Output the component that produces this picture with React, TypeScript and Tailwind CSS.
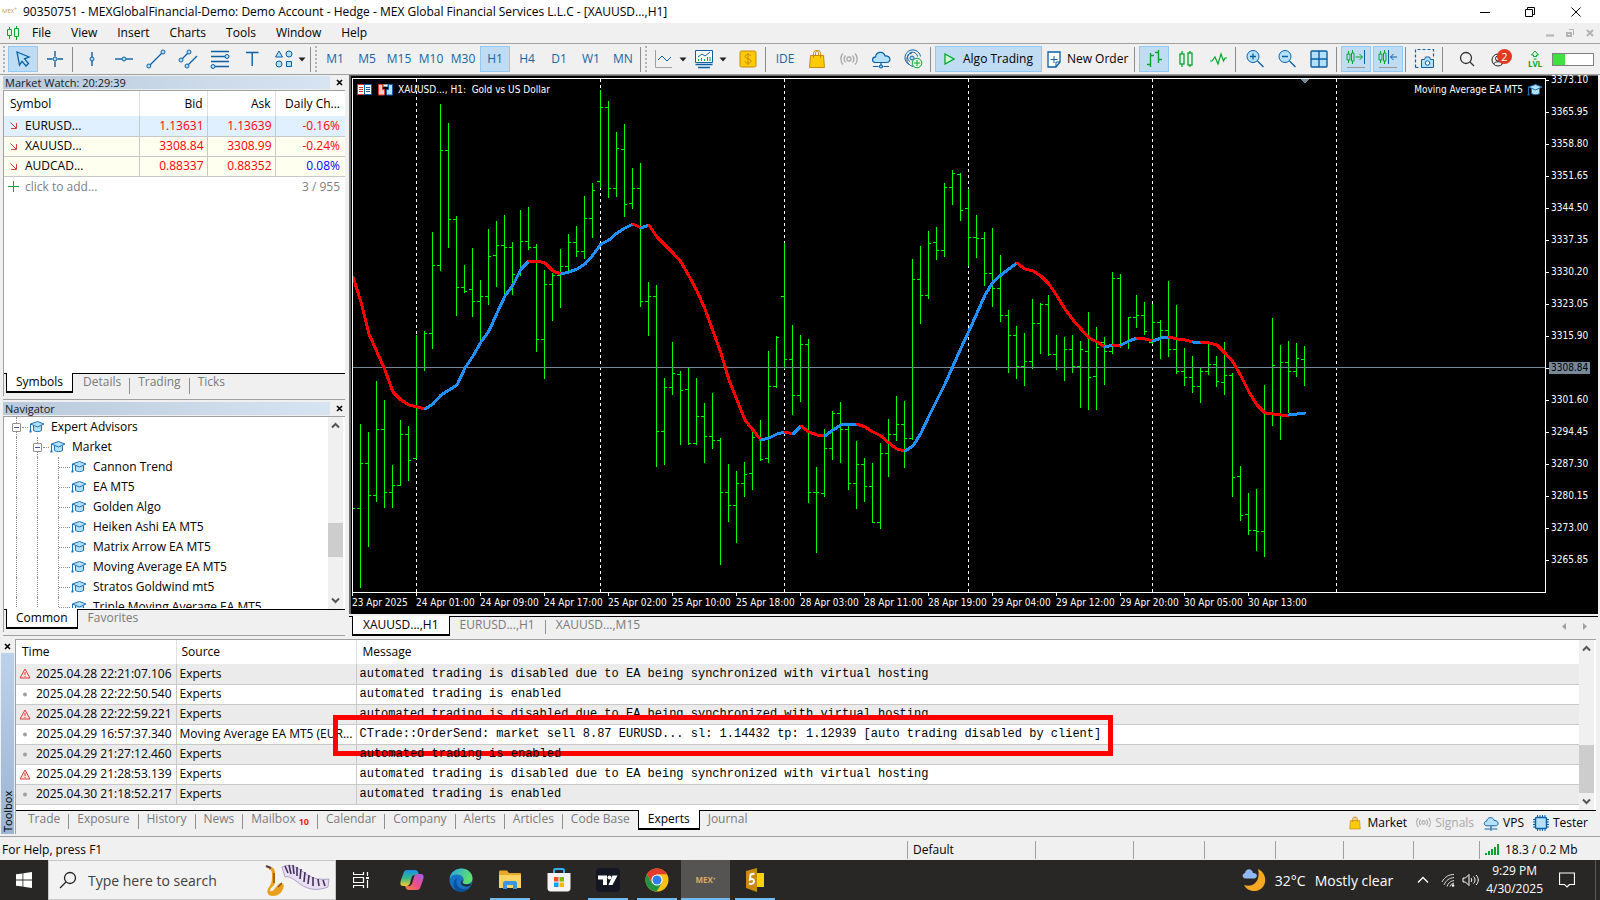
import React from 'react';
import clsx from 'clsx';

const BLUE = '#0a5fa5';
const LIGHT = '#b5e0fb';
const GREEN = '#05a62b';

// high, low, open, close in ticks below the top of the price scale
const bars: number[][] = [
  [1013, 1487, 1258, 1128], [1037, 1368, 1128, 1221], [889, 1237, 1221, 1029], [944, 1254, 1029, 1210],
  [1132, 1254, 1210, 1190], [1002, 1190, 1190, 1043], [1019, 1176, 1043, 1119], [756, 1113, 1113, 847],
  [743, 858, 847, 750], [456, 793, 750, 553], [84, 566, 553, 219], [139, 498, 219, 419],
  [409, 697, 419, 615], [552, 629, 615, 626], [502, 700, 622, 655], [595, 780, 655, 641],
  [447, 665, 643, 527], [424, 613, 524, 495], [407, 640, 495, 500], [485, 636, 500, 577],
  [392, 580, 577, 483], [383, 505, 483, 498], [491, 801, 498, 766], [566, 880, 766, 608],
  [575, 711, 608, 582], [505, 674, 580, 556], [462, 573, 556, 486], [438, 527, 486, 512],
  [351, 530, 512, 416], [314, 470, 416, 335], [44, 325, 309, 94], [75, 354, 94, 329],
  [166, 351, 329, 213], [142, 409, 216, 374], [270, 386, 371, 329], [256, 671, 329, 657],
  [601, 755, 657, 643], [610, 1135, 643, 1035], [880, 1130, 1035, 907], [775, 926, 907, 866],
  [859, 1071, 869, 916], [849, 1071, 913, 1068], [880, 1071, 1068, 991], [952, 1124, 991, 1049],
  [923, 1083, 1049, 1061], [1054, 1420, 1061, 1210], [1130, 1295, 1212, 1250], [1150, 1356, 1250, 1186],
  [1124, 1222, 1186, 1158], [1037, 1202, 1155, 1052], [1002, 1118, 1052, 1116], [801, 1124, 1113, 904],
  [759, 905, 904, 760], [487, 850, 643, 826], [726, 984, 826, 930], [755, 947, 930, 782],
  [767, 1240, 782, 1212], [1138, 1385, 1212, 1212], [1028, 1222, 1215, 1084], [976, 1115, 1084, 980],
  [950, 1124, 980, 1029], [1020, 1202, 1029, 1184], [1063, 1257, 1184, 1129], [1112, 1237, 1129, 1192],
  [1127, 1298, 1192, 1297], [1069, 1315, 1297, 1099], [999, 1164, 1099, 1041], [932, 1060, 1041, 1014],
  [947, 1138, 1014, 1055], [534, 1057, 1055, 593], [497, 720, 593, 640], [453, 648, 640, 489],
  [441, 534, 486, 507], [314, 525, 507, 326], [276, 375, 326, 286], [285, 421, 288, 393],
  [331, 552, 387, 471], [407, 528, 471, 474], [456, 610, 474, 576], [444, 671, 576, 619],
  [523, 714, 619, 698], [682, 862, 698, 756], [729, 880, 756, 844], [749, 900, 844, 831],
  [650, 850, 831, 721], [662, 807, 721, 666], [639, 813, 666, 811], [755, 854, 811, 847],
  [761, 886, 847, 797], [755, 862, 797, 844], [772, 964, 844, 797], [688, 970, 800, 878],
  [732, 970, 875, 790], [761, 897, 776, 802], [572, 807, 802, 590], [578, 790, 590, 783],
  [703, 793, 775, 704], [639, 732, 704, 698], [659, 752, 698, 744], [665, 778, 775, 718],
  [711, 822, 718, 741], [598, 816, 741, 795], [668, 865, 795, 860], [793, 900, 860, 878],
  [816, 920, 878, 904], [849, 950, 904, 860], [772, 868, 860, 840], [816, 903, 840, 888],
  [775, 926, 890, 872], [865, 1222, 872, 1168], [1135, 1292, 1165, 1279], [1214, 1333, 1276, 1322],
  [1202, 1379, 1322, 1325], [900, 1397, 1325, 980], [706, 1016, 980, 843], [784, 1057, 849, 834],
  [772, 978, 834, 860], [778, 874, 860, 823], [787, 900, 826, 849],
];

// moving average: one value per bar, starting one bar before the first
const average = [
  587, 660, 752, 805, 858, 921, 945, 957, 965, 971, 954, 930, 915, 901, 850, 817, 775, 742, 692, 643,
  610, 562, 539, 541, 545, 570, 579, 571, 562, 549, 523, 492, 480, 460, 445, 434, 445, 437, 470, 493,
  516, 543, 585, 628, 680, 742, 806, 885, 943, 1001, 1030, 1060, 1053, 1042, 1037, 1042, 1020, 1036,
  1046, 1049, 1030, 1017, 1014, 1014, 1022, 1038, 1049, 1070, 1085, 1093, 1077, 1040, 990, 945, 898,
  845, 793, 742, 690, 640, 602, 582, 564, 547, 564, 570, 584, 606, 643, 679, 711, 737, 763, 776, 790,
  783, 785, 773, 765, 768, 771, 765, 762, 768, 769, 776, 776, 779, 785, 806, 834, 875, 920, 957, 980,
  985, 988, 988, 985, 982,
];
// flat steps that count as rising
const risingFlats = [63, 106];

const barX = (i: number) => 7 + i * 8;
const toY = (v: number) => Math.round(v / 2.9037) - 4;

const timeLabels = [
  '23 Apr 2025', '24 Apr 01:00', '24 Apr 09:00', '24 Apr 17:00', '25 Apr 02:00', '25 Apr 10:00',
  '25 Apr 18:00', '28 Apr 03:00', '28 Apr 11:00', '28 Apr 19:00', '29 Apr 04:00', '29 Apr 12:00',
  '29 Apr 20:00', '30 Apr 05:00', '30 Apr 13:00',
];

const priceLabels = [
  '3373.10', '3365.95', '3358.80', '3351.65', '3344.50', '3337.35', '3330.20', '3323.05', '3315.90',
  '3308.84', '3301.60', '3294.45', '3287.30', '3280.15', '3273.00', '3265.85',
];

const symbols = [
  { name: 'EURUSD...', bid: '1.13631', ask: '1.13639', change: '-0.16%' },
  { name: 'XAUUSD...', bid: '3308.84', ask: '3308.99', change: '-0.24%' },
  { name: 'AUDCAD...', bid: '0.88337', ask: '0.88352', change: '0.08%' },
];

const advisors = [
  'Cannon Trend', 'EA MT5', 'Golden Algo', 'Heiken Ashi EA MT5', 'Matrix Arrow EA MT5',
  'Moving Average EA MT5', 'Stratos Goldwind mt5', 'Triple Moving Average EA MT5',
];

const DISABLED = 'automated trading is disabled due to EA being synchronized with virtual hosting';
const ENABLED = 'automated trading is enabled';

const logs = [
  { time: '2025.04.28 22:21:07.106', source: 'Experts', message: DISABLED, warn: true },
  { time: '2025.04.28 22:22:50.540', source: 'Experts', message: ENABLED },
  { time: '2025.04.28 22:22:59.221', source: 'Experts', message: DISABLED, warn: true },
  {
    time: '2025.04.29 16:57:37.340',
    source: 'Moving Average EA MT5 (EUR...',
    message: 'CTrade::OrderSend: market sell 8.87 EURUSD... sl: 1.14432 tp: 1.12939 [auto trading disabled by client]',
    marked: true,
  },
  { time: '2025.04.29 21:27:12.460', source: 'Experts', message: ENABLED },
  { time: '2025.04.29 21:28:53.139', source: 'Experts', message: DISABLED, warn: true },
  { time: '2025.04.30 21:18:52.217', source: 'Experts', message: ENABLED },
];

const Icon: React.FC<{ w?: number; h?: number; stroke?: string; children: React.ReactNode }> = ({
  w = 20,
  h = 20,
  stroke = BLUE,
  children,
}) => (
  <svg width={w} height={h} viewBox={`0 0 ${w} ${h}`} fill="none" stroke={stroke} className="shrink-0" aria-hidden="true">
    {children}
  </svg>
);

const HatIcon = () => (
  <Icon w={16} h={14} stroke="#1a70b4">
    <path d="M4.500 5.500v5c2 1.500 6 1.500 8 0v-5" fill={LIGHT} />
    <path d="M1.500 4 8.500 1.500l6.500 2.500-6.500 3z" fill={LIGHT} strokeLinejoin="round" />
    <path d="M1.500 4v7" />
    <rect x="0.500" y="10.500" width="2" height="2" fill="#1a70b4" stroke="none" />
  </Icon>
);

const BagIcon = ({ size = 20 }: { size?: number }) => (
  <svg width={size} height={size} viewBox="0 0 20 20" fill="none" stroke="#c98a0a" className="shrink-0" aria-hidden="true">
    <path d="M3.500 6.500h13l1 12h-15z" fill="#fccb05" />
    <path d="M6.500 9V4.500c0-4 5-4 5 0V7M8.500 7V4.500c0-4 5-4 5 0V9" />
  </svg>
);

const SignalIcon = ({ size = 18 }: { size?: number }) => (
  <svg width={size} height={size} viewBox="0 0 18 18" fill="none" stroke="#a8a8a8" strokeWidth="1.300" className="shrink-0" aria-hidden="true">
    <circle cx="9" cy="9" r="2" />
    <path d="M5.500 5.500c-1.600 2-1.600 5 0 7M12.500 5.500c1.600 2 1.600 5 0 7M2.800 3.500c-2.600 3.200-2.600 7.800 0 11M15.200 3.500c2.600 3.200 2.600 7.800 0 11" />
  </svg>
);

const CloudIcon = ({ size = 20 }: { size?: number }) => (
  <svg width={size} height={size} viewBox="0 0 20 20" fill="none" stroke={BLUE} strokeWidth="1.200" className="shrink-0" aria-hidden="true">
    <path d="M5 13.500C.5 13.500.5 8 4.600 7.800 5 2.500 12.500 1.500 14 6.800c6-.3 6.500 6.700 1.500 6.700z" fill={LIGHT} />
    <path d="M10 13.500V16M2 17.500h5.500M12.500 17.500H18" />
    <circle cx="10" cy="17.500" r="1.500" fill={LIGHT} />
  </svg>
);

const Tool: React.FC<{ label: string; active?: boolean; wide?: string; children: React.ReactNode }> = ({
  label,
  active,
  wide = 'w-[30px] justify-center',
  children,
}) => (
  <button
    type="button"
    aria-label={label}
    className={clsx(
      'flex h-[26px] shrink-0 items-center border',
      wide,
      active ? 'border-[#90c8f6] bg-[#c0dcf3]' : 'border-transparent'
    )}
  >
    {children}
  </button>
);

const Caret = () => (
  <svg width="8" height="5" viewBox="0 0 8 5" className="shrink-0" aria-hidden="true">
    <path d="M0.500 0.500h7L4 4.500z" fill="#222" />
  </svg>
);

const Sep = () => <span className="mr-[2px] h-[25px] w-px shrink-0 bg-[#8c8c8c]" />;
const Grip = () => <span className="mr-px h-[26px] shrink-0 border-l-2 border-dotted border-[#b4b4b4]" />;

const Candles = ({ w = 16, h = 18 }: { w?: number; h?: number }) => (
  <svg width={w} height={h} viewBox="0 0 16 18" fill="none" stroke={GREEN} strokeWidth="1.300" aria-hidden="true">
    <path d="M4 1v3M4 14v3M12 1v2M12 15v2" />
    <rect x="2" y="4" width="4" height="10" />
    <rect x="10" y="3" width="4" height="12" />
  </svg>
);

const TitleBar = () => (
  <header className="flex h-[23px] items-center bg-white">
    <span className="ml-[2px] w-[21px] text-[6px] text-[#c89a4e]">MEX<sup>+</sup></span>
    <h1 className="flex-1 truncate text-[12px]">
      90350751 - MEXGlobalFinancial-Demo: Demo Account - Hedge - MEX Global Financial Services L.L.C - [XAUUSD...,H1]
    </h1>
    <div className="flex items-center">
      <button type="button" aria-label="Minimize" className="flex w-[45px] justify-center">
        <Icon w={10} h={10} stroke="#000"><path d="M0 5.500h10" /></Icon>
      </button>
      <button type="button" aria-label="Restore" className="flex w-[45px] justify-center">
        <Icon w={10} h={10} stroke="#000"><path d="M.5 2.500h7v7h-7zM2.500 2.500v-2h7v7h-2" /></Icon>
      </button>
      <button type="button" aria-label="Close" className="flex w-[48px] justify-center">
        <Icon w={10} h={10} stroke="#000"><path d="M.5.5l9 9M9.500.5l-9 9" /></Icon>
      </button>
    </div>
  </header>
);

const MenuBar = () => (
  <nav className="flex h-5 items-center pl-[6px] text-[12px]">
    <Icon w={14} h={14} stroke={GREEN}>
      <path d="M3.500 1v2M3.500 10v3M10.500 0v2M10.500 11v3" />
      <path d="M1.500 3.500h4v6h-4zM8.500 2.500h4v8h-4z" />
    </Icon>
    <div className="ml-3 flex gap-5">
      {['File', 'View', 'Insert', 'Charts', 'Tools', 'Window', 'Help'].map((item) => (
        <button type="button" key={item}>{item}</button>
      ))}
    </div>
    <div className="mr-[6px] ml-auto flex items-center gap-3">
      <Icon w={8} h={8} stroke="#b4b4b4"><path d="M0 6.500h8" strokeWidth="2" /></Icon>
      <Icon w={8} h={8} stroke="#b4b4b4"><path d="M1 4h4v3H1z" strokeWidth="2" /><path d="M3 .5h4.500V6" /></Icon>
      <Icon w={8} h={8} stroke="#b4b4b4"><path d="M1 1l6 6M7 1L1 7" strokeWidth="2" /></Icon>
    </div>
  </nav>
);

const Toolbar = () => (
  <div className="flex h-8 items-center gap-[2px] border-y border-[#a0a0a0] pl-[3px] text-[12px]">
    <Grip />
    <Tool label="Cursor" active>
      <Icon><path d="M4 3l12 5-4.500 1.800 4 4.700-2.500 2.500-4-4.700L6.500 16z" fill={LIGHT} strokeWidth="1.300" /></Icon>
    </Tool>
    <Tool label="Crosshair">
      <Icon><path d="M10 2v5.500M10 12.500V18M2 10h5.500M12.500 10H18" strokeWidth="1.400" /><circle cx="10" cy="10" r="2" fill={LIGHT} /></Icon>
    </Tool>
    <Sep />
    <Tool label="Vertical line">
      <Icon><path d="M10 3v14" strokeWidth="1.400" /><circle cx="10" cy="10" r="2" fill={LIGHT} /></Icon>
    </Tool>
    <Tool label="Horizontal line">
      <Icon><path d="M1 10h18" strokeWidth="1.400" /><circle cx="10" cy="10" r="2" fill={LIGHT} /></Icon>
    </Tool>
    <Tool label="Trend line">
      <Icon><path d="M3 17L17 3" strokeWidth="1.300" /><circle cx="2.800" cy="17" r="2" fill={LIGHT} /><circle cx="17" cy="3" r="2" fill={LIGHT} /></Icon>
    </Tool>
    <Tool label="Channel">
      <Icon>
        <path d="M3 11l8-8M9 17l10-10" strokeWidth="1.300" />
        <circle cx="3" cy="11" r="2" fill={LIGHT} /><circle cx="11" cy="3" r="2" fill={LIGHT} /><circle cx="9" cy="17" r="2" fill={LIGHT} />
      </Icon>
    </Tool>
    <Tool label="Fibonacci">
      <Icon>
        <path d="M1 2.500h18M1 7.500h18M1 12.500h18M1 17.500h18" strokeWidth="1.300" />
        <circle cx="17" cy="7.500" r="2" fill={LIGHT} /><circle cx="3" cy="17.500" r="2" fill={LIGHT} />
      </Icon>
    </Tool>
    <Tool label="Text"><Icon><path d="M4 3.500h12.500M10.200 3.500V17" strokeWidth="1.400" /></Icon></Tool>
    <Tool label="Shapes" wide="mr-px w-[38px] justify-between pl-[4px]">
      <Icon>
        <path d="M5 2l3.500 6h-7z" fill={LIGHT} /><circle cx="15" cy="5" r="3" fill={LIGHT} />
        <circle cx="5" cy="15" r="3" fill={LIGHT} /><path d="M12.500 12.500h5v5h-5z" fill={LIGHT} />
      </Icon>
      <Caret />
    </Tool>
    <Sep />
    <Grip />
    {['M1', 'M5', 'M15', 'M10', 'M30', 'H1', 'H4', 'D1', 'W1', 'MN'].map((tf) => (
      <Tool key={tf} label={tf} active={tf === 'H1'}>
        <span className="text-[#1a64a0]">{tf}</span>
      </Tool>
    ))}
    <Sep />
    <Grip />
    <Tool label="Line studies" wide="w-[38px] justify-between pl-[3px]">
      <Icon><path d="M1.500 1v17.500H18" stroke="#a0a0a0" /><path d="M4 11l4-4 5 5 4-4" /></Icon>
      <Caret />
    </Tool>
    <Tool label="Indicators" wide="w-[38px] justify-between pl-[3px]">
      <Icon>
        <path d="M1.500 1.500h17v12h-17z" fill="#fff" /><path d="M4 8l4-3 3 2 5-4" />
        <path d="M4.500 12v-2M7.500 12V9M10.500 12v-2M13.500 12V8M16 12V8" stroke={GREEN} />
        <path d="M1.500 15.500h17M4 18.500h12" strokeWidth="1.600" />
      </Icon>
      <Caret />
    </Tool>
    <span className="w-px" />
    <Tool label="Depth of market">
      <Icon w={18} h={18} stroke="#c98a0a">
        <rect x="1" y="1" width="16" height="16" rx="1.500" fill="#fccb05" />
        <path d="M12 6c-1-2-6-2-6 .5s6 2 6 4.500-5 3-6 .5M9 3v12" />
      </Icon>
    </Tool>
    <Sep />
    <Tool label="MetaEditor"><span className="text-[#1a64a0]">IDE</span></Tool>
    <Tool label="Market"><BagIcon /></Tool>
    <Tool label="Signals"><SignalIcon /></Tool>
    <Tool label="VPS"><CloudIcon /></Tool>
    <Tool label="Copy trading">
      <Icon>
        <path d="M6 15.500a7.800 7.800 0 1 1 11.500-8M7 12.500a5 5 0 1 1 7.500-5M10 17.500C2 15.500 2 5.500 9 4" />
        <circle cx="9" cy="9" r="2" fill={LIGHT} />
        <circle cx="14" cy="14" r="4.800" fill="#e6fbe9" stroke={GREEN} /><path d="M14 11v6M11 14h6" stroke={GREEN} />
      </Icon>
    </Tool>
    <Sep />
    <Tool label="Algo Trading" active wide="px-2 gap-2">
      <Icon w={11} h={12} stroke={GREEN}><path d="M1 1l9 5-9 5z" fill="#d7f7dd" strokeWidth="1.300" /></Icon>
      <span className="whitespace-nowrap">Algo Trading</span>
    </Tool>
    <Tool label="New Order" wide="pl-[2px] pr-[3px] gap-[6px]">
      <Icon w={14} h={17}>
        <path d="M1 1h12v10l-4 5H1z" fill="#fff" strokeWidth="1.300" /><path d="M13 11H9v5M7 5v7M3.500 8.500h7" />
      </Icon>
      <span className="whitespace-nowrap">New Order</span>
    </Tool>
    <Sep />
    <Tool label="Bar chart" active>
      <Icon stroke={GREEN}><path d="M6.500 4v14M3 15.500h3.500M6.500 6.500H10M14.500 1v13M11 3.500h3.500M14.500 10.500H18" strokeWidth="1.400" /></Icon>
    </Tool>
    <Tool label="Candlesticks"><Candles /></Tool>
    <Tool label="Line chart">
      <Icon stroke={GREEN}><path d="M2 12h2l3-4 3 7 3-10 2.500 7L17 9h2" strokeWidth="1.200" /></Icon>
    </Tool>
    <Sep />
    <Tool label="Zoom in">
      <Icon><circle cx="8" cy="7.500" r="6" fill={LIGHT} /><path d="M8 4.500v6M5 7.500h6M12.500 12l6 6" strokeWidth="1.300" /></Icon>
    </Tool>
    <Tool label="Zoom out">
      <Icon><circle cx="8" cy="7.500" r="6" fill={LIGHT} /><path d="M5 7.500h6M12.500 12l6 6" strokeWidth="1.300" /></Icon>
    </Tool>
    <Tool label="Tile windows">
      <Icon w={18} h={18}><rect x="1" y="1" width="16" height="16" rx="1" fill={LIGHT} strokeWidth="1.400" /><path d="M9 1v16M1 9h16" strokeWidth="1.400" /></Icon>
    </Tool>
    <Sep />
    {['Auto scroll', 'Chart shift'].map((label, i) => (
      <Tool key={label} label={label} active>
        <Icon>
          <path d="M2.500 2v3M2.500 11v3M6.500 1v3M6.500 12v3M1 5h3v6H1zM5.500 4h2.500v8H5.500z" stroke={GREEN} />
          {i === 0
            ? <><path d="M9.500 8h7M13.500 5l3 3-3 3" stroke={GREEN} /><path d="M18.500 1v14" /></>
            : <path d="M10.500 1v14M12.500 8H19M15.500 5l-3 3 3 3" />}
          <path d="M1 18.500h18" stroke="#999" />
        </Icon>
      </Tool>
    ))}
    <Sep />
    <Tool label="Screenshot">
      <Icon w={22} h={22}>
        <path d="M1.500 19.500v-18h18v8M1.500 19.500h4" strokeDasharray="3 2" strokeWidth="1.200" />
        <path d="M7.500 11.500h3l1-2.500h4l1 2.500h3v8h-12z" fill={LIGHT} /><circle cx="13.500" cy="15" r="2.200" fill="#fff" />
      </Icon>
    </Tool>
    <Sep />
    <div className="mr-[6px] ml-auto flex items-center">
      <Tool label="Search">
        <Icon w={16} h={16} stroke="#333"><circle cx="7" cy="7" r="5.500" strokeWidth="1.300" /><path d="M11 11l4 4" strokeWidth="1.300" /></Icon>
      </Tool>
      <Tool label="Notifications" wide="ml-2 w-[30px] relative">
        <Icon w={15} h={15} stroke="#222"><circle cx="7" cy="8" r="6" /><circle cx="7" cy="6.500" r="2.500" /><path d="M2.500 12c1.500-3 7.500-3 9 0" /></Icon>
        <span className="absolute top-[2px] left-[6px] h-[15px] w-[15px] rounded-full bg-[#e23a20] text-[11px] leading-[15px] text-white">2</span>
      </Tool>
      <Tool label="Level" wide="w-[30px] flex-col justify-center">
        <Icon w={12} h={10} stroke={GREEN}><path d="M6 1l3.500 4H7.500v1.500h-3V5h-2zM4.500 9h3" /></Icon>
        <span className="text-[8px] leading-[8px] font-bold text-[#05a62b]">LVL</span>
      </Tool>
      <span className="ml-[2px] flex h-[13px] w-[42px] border border-[#808080] bg-white"><i className="w-[12px] bg-[#3fe03f]" /></span>
    </div>
  </div>
);

const PanelTitle = ({ children }: { children: React.ReactNode }) => (
  <div className="mb-px flex h-[13px] items-center justify-between text-[11px] leading-[13px]">
    <h2 className="flex-1 bg-linear-to-r from-[#b9c9db] to-[#d7e4f2] pl-[2px] text-[#101820]">{children}</h2>
    <button type="button" aria-label="Close panel" className="flex w-[15px] justify-end pr-[2px]">
      <Icon w={7} h={7} stroke="#000"><path d="M1 1l5 5M6 1L1 6" strokeWidth="1.600" /></Icon>
    </button>
  </div>
);

const tabBase = '-mt-px h-5 border-x border-b-2 border-transparent px-[7px] leading-[18px]';
const tabOn = '-mt-px h-5 border-x border-b-2 border-black bg-white px-[9px] leading-[18px] text-black';

const MarketWatch = () => (
  <section className="flex h-[325px] flex-col border-b border-[#a0a0a0] pt-px pb-[3px]">
    <PanelTitle>Market Watch: 20:29:39</PanelTitle>
    <div className="flex flex-1 flex-col border-t border-l border-[#a0a0a0] bg-white text-[12px]">
      <table className="w-full table-fixed border-collapse">
        <thead>
          <tr className="h-[25px]">
            <th className="w-[135px] border-r border-[#e0e0e0] pl-[6px] text-left font-normal">Symbol</th>
            <th className="w-[68px] border-r border-[#e0e0e0] pr-[4px] text-right font-normal">Bid</th>
            <th className="w-[68px] border-r border-[#e0e0e0] pr-[4px] text-right font-normal">Ask</th>
            <th className="pr-[5px] text-right font-normal whitespace-nowrap">Daily Ch...</th>
          </tr>
        </thead>
        <tbody>
          {symbols.map((s, i) => (
            <tr key={s.name} className={clsx('h-5 border-b border-[#c8c8c8] text-[#ff0000]', i === 0 ? 'bg-[#e0f0ff]' : 'bg-[#fffff0]')}>
              <td className="border-r border-[#c8c8c8] p-0 text-black">
                <span className="flex items-center gap-2 pl-[6px]">
                  <Icon w={7} h={7} stroke="#d83c3c"><path d="M.5.5l5.500 5.500M6.500 1v5.500H1" /></Icon>
                  {s.name}
                </span>
              </td>
              <td className="border-r border-[#c8c8c8] p-0 pr-[3px] text-right">{s.bid}</td>
              <td className="border-r border-[#c8c8c8] p-0 pr-[3px] text-right">{s.ask}</td>
              <td className={clsx('p-0 pr-[5px] text-right', !s.change.startsWith('-') && 'text-[#0000ff]')}>{s.change}</td>
            </tr>
          ))}
        </tbody>
      </table>
      <div className="flex h-5 items-center pr-[5px] pl-[4px] text-[#808080]">
        <Icon w={11} h={11} stroke={GREEN}><path d="M5.500 0v11M0 5.500h11" /></Icon>
        <button type="button" className="ml-[6px]">click to add...</button>
        <span className="ml-auto">3 / 955</span>
      </div>
      <div className="mt-auto flex h-[23px] border-t border-black bg-[#f0f0f0] pl-[2px] text-[#7a7a7a]">
        <button type="button" className={tabOn}>Symbols</button>
        <button type="button" className={clsx(tabBase, 'ml-[2px]')}>Details</button>
        <i className="mt-1 h-4 w-px bg-[#909090]" />
        <button type="button" className={tabBase}>Trading</button>
        <i className="mt-1 h-4 w-px bg-[#909090]" />
        <button type="button" className={tabBase}>Ticks</button>
      </div>
    </div>
  </section>
);

const Guide = ({ box, end }: { box?: boolean; end?: boolean }) => (
  <span className={clsx('relative flex h-5 shrink-0 items-center border-l border-dotted border-[#909090]', end ? 'w-[13px]' : 'w-[21px]')}>
    {end && <i className={clsx('h-px border-t border-dotted border-[#909090]', box ? 'ml-[5px] w-[6px]' : 'w-[11px]')} />}
    {box && (
      <button type="button" aria-label="Collapse" className="absolute top-[6px] -left-[5px] flex h-[9px] w-[9px] items-center justify-center rounded-[1px] border border-[#909090] bg-white">
        <i className="h-px w-[5px] bg-[#3858a8]" />
      </button>
    )}
  </span>
);

const ScrollArrow = ({ up, label }: { up?: boolean; label: string }) => (
  <button type="button" aria-label={label} className="flex h-[17px] items-center justify-center">
    <Icon w={9} h={7} stroke="#555"><path d={up ? 'M1 5.500l3.500-3.500L8 5.500' : 'M1 1.500L4.500 5 8 1.500'} strokeWidth="2" /></Icon>
  </button>
);

const Navigator = () => (
  <section className="flex flex-1 flex-col border-b border-[#a0a0a0] pt-[2px] pb-[3px]">
    <PanelTitle>Navigator</PanelTitle>
    <div className="flex flex-1 flex-col border-t border-l border-[#a0a0a0] bg-white text-[12px]">
      <div className="flex h-[191px] grow">
        <ul className="h-[191px] flex-1 overflow-hidden pl-[12px]">
          <li className="flex h-5 items-center">
            <Guide box end /><HatIcon /><span className="ml-[6px]">Expert Advisors</span>
          </li>
          <li className="flex h-5 items-center">
            <Guide /><Guide box end /><HatIcon /><span className="ml-[6px]">Market</span>
          </li>
          {advisors.map((name) => (
            <li key={name} className="flex h-5 items-center">
              <Guide /><Guide /><Guide end /><HatIcon /><span className="ml-[6px] whitespace-nowrap">{name}</span>
            </li>
          ))}
        </ul>
        <div className="mr-[2px] flex w-[15px] flex-col bg-[#f0f0f0]">
          <ScrollArrow up label="Scroll up" />
          <span className="mt-[89px] h-[34px] bg-[#cdcdcd]" />
          <span className="mt-auto" />
          <ScrollArrow label="Scroll down" />
        </div>
      </div>
      <div className="flex h-[23px] border-t border-black bg-[#f0f0f0] pl-[2px] text-[#7a7a7a]">
        <button type="button" className={tabOn}>Common</button>
        <button type="button" className={clsx(tabBase, 'ml-[2px]')}>Favorites</button>
      </div>
    </div>
  </section>
);

const averageColor = (i: number) =>
  average[i + 1] < average[i] || risingFlats.includes(i + 1) ? '#1e90ff' : '#ff0000';

const Plot = () => (
  <svg width="100%" height="513" className="block" shapeRendering="crispEdges" role="img" aria-label="XAUUSD hourly bars">
    {[0, 1, 2, 3, 4, 5].map((d) => (
      <path key={d} d={`M${63.5 + d * 184} 0V513`} stroke="#fff" strokeDasharray="3 3" />
    ))}
    <path
      fill="none"
      stroke="#00ff00"
      d={bars
        .map(([high, low, open, close], i) => {
          const x = barX(i);
          return `M${x + 0.5} ${toY(high)}V${toY(low) + 1}M${x - 3} ${toY(open) + 0.5}H${x}M${x + 1} ${toY(close) + 0.5}h2`;
        })
        .join('') + `M0 ${toY(1258) + 0.5}h2`}
    />
    <line x1="0" x2="100%" y1="288.5" y2="288.5" stroke="#778899" />
    {average.slice(0, -1).map((v, i) => (
      <line
        key={i}
        x1={barX(i - 1) + 1}
        y1={toY(v)}
        x2={barX(i) + 1}
        y2={toY(average[i + 1])}
        stroke={averageColor(i)}
        strokeWidth="3"
        strokeLinecap="round"
      />
    ))}
    <path d="M947 0h9l-4.500 4.500z" fill="#778899" />
  </svg>
);

const Chart = () => (
  <div className="flex flex-1 flex-col border-t border-l-2 border-[#696969] bg-black font-['DejaVu_Sans_Condensed','DejaVu_Sans',sans-serif] text-[10px] text-white">
    <div className="flex">
      <div className="relative mt-[2px] ml-px min-w-0 flex-1 border border-white">
        <Plot />
        <div className="absolute top-[3px] left-[4px] flex items-center">
          <Icon w={15} h={12}>
            <path d="M.5.5h7v10h-7z" fill="#fff" stroke="#d8362f" /><path d="M2 3.500h4M2 5.500h4M2 7.500h4" stroke="#d8362f" />
            <path d="M7.500.5h7v10h-7z" fill="#fff" /><path d="M9 3.500h4M9 5.500h4M9 7.500h4" />
          </Icon>
          <span className="w-[6px]" />
          <Icon w={15} h={12}>
            <path d="M.5.5h4v5h2v5.500h-6z" fill="#fbc9c4" stroke="#d8362f" /><path d="M10.500.5h4v10.500h-6V5.500h2z" fill={LIGHT} />
            <path d="M5.500.5h4v2h-4z" fill="#fff" stroke="#999" />
          </Icon>
          <span className="ml-[5px] whitespace-pre">XAUUSD..., H1:  Gold vs US Dollar</span>
        </div>
        <div className="absolute top-[3px] right-[2px] flex items-center gap-1">
          Moving Average EA MT5 <HatIcon />
        </div>
      </div>
      <div className="w-[52px] shrink-0">
        {priceLabels.map((price) => (
          <div key={price} className="flex h-8 items-start leading-[8px]">
            <div className="flex h-2 items-center">
              <i className="h-px w-[3px] bg-white" />
              {price === '3308.84'
                ? <span className="bg-[#778899] px-[2px] leading-[12px] text-black">{price}</span>
                : <span className="pl-[2px]">{price}</span>}
            </div>
          </div>
        ))}
      </div>
    </div>
    <div className="flex h-[20px] pl-px">
      {timeLabels.map((label) => (
        <div key={label} className="w-16 shrink-0 whitespace-nowrap">
          <i className="block h-[3px] w-px bg-white" />
          <span className="block leading-[13px]">{label}</span>
        </div>
      ))}
    </div>
  </div>
);

const ChartTabs = () => (
  <div className="mt-[2px] flex h-[20px] border-t border-black pl-[3px] text-[12px] text-[#7a7a7a]">
    <button type="button" className="-mt-px h-5 border-x border-b-2 border-black bg-white px-[10px] leading-[18px] text-black">XAUUSD...,H1</button>
    <button type="button" className="-mt-px h-5 border-b-2 border-transparent px-[10px] leading-[18px]">EURUSD...,H1</button>
    <i className="mt-[3px] h-[14px] w-px bg-[#909090]" />
    <button type="button" className="-mt-px h-5 border-b-2 border-transparent px-[10px] leading-[18px]">XAUUSD...,M15</button>
    <div className="mr-[11px] ml-auto flex items-center gap-[17px]">
      <Icon w={4} h={7} stroke="none"><path d="M4 0v7L0 3.500z" fill="#a0a0a0" /></Icon>
      <Icon w={4} h={7} stroke="none"><path d="M0 0v7l4-3.500z" fill="#a0a0a0" /></Icon>
    </div>
  </div>
);

const LogTable = () => (
  <table className="w-full table-fixed border-collapse text-[12px]">
    <thead>
      <tr className="h-6">
        <th className="w-[160px] border-r border-[#e0e0e0] pl-[6px] text-left font-normal">Time</th>
        <th className="w-[180px] border-r border-[#e0e0e0] pl-[5px] text-left font-normal">Source</th>
        <th className="pl-[6px] text-left font-normal">Message</th>
      </tr>
    </thead>
    <tbody>
      {logs.map((log, i) => (
        <tr key={log.time} className={clsx('h-5 border-b border-[#c8c8c8]', i % 2 === 0 ? 'bg-[#ebebeb]' : 'bg-white')}>
          <td className="border-r border-[#c8c8c8] p-0">
            <span className="flex items-center pl-[3px] whitespace-nowrap">
              <Icon w={12} h={11} stroke="#d8403a">
                {log.warn
                  ? <><path d="M6 1l5 9H1z" fill="#fde0dc" /><path d="M6 4v3M6 8v1" /></>
                  : <circle cx="6" cy="5.500" r="2" fill="#a0a0a0" stroke="none" />}
              </Icon>
              <span className="ml-[5px]">{log.time}</span>
            </span>
          </td>
          <td className="overflow-hidden border-r border-[#c8c8c8] p-0 pl-[3px] whitespace-nowrap">{log.source}</td>
          <td className="relative p-0 pl-[3px] font-['Liberation_Mono',monospace] whitespace-nowrap">
            {log.message}
            {log.marked && <span className="absolute -top-[10px] -left-[24px] h-[41px] w-[780px] border-[5px] border-[#ff0000]" />}
          </td>
        </tr>
      ))}
    </tbody>
  </table>
);

const toolboxTabs = ['Trade', 'Exposure', 'History', 'News', 'Mailbox', 'Calendar', 'Company', 'Alerts', 'Articles', 'Code Base', 'Experts', 'Journal'];

const Toolbox = () => (
  <section className="flex h-[201px] border-b border-[#a0a0a0] pt-[3px] pb-[2px]">
    <div className="flex w-[15px] flex-col items-center">
      <button type="button" aria-label="Close toolbox" className="flex h-[14px] items-center">
        <Icon w={7} h={7} stroke="#000"><path d="M1 1l5 5M6 1L1 6" strokeWidth="1.600" /></Icon>
      </button>
      <h2 className="flex w-[13px] flex-1 rotate-180 items-center bg-linear-to-b from-[#9ab4d2] to-[#bcd2ec] pt-[2px] text-[11px] leading-[13px] [writing-mode:vertical-rl]">
        Toolbox
      </h2>
    </div>
    <div className="mr-1 flex min-w-0 flex-1 flex-col border-t border-l border-[#a0a0a0]">
      <div className="flex h-[171px] border-b border-black bg-white">
        <div className="min-w-0 flex-1"><LogTable /></div>
        <div className="mr-[2px] flex w-[15px] flex-col bg-[#f0f0f0]">
          <ScrollArrow up label="Scroll log up" />
          <span className="mt-[88px] h-[48px] bg-[#cdcdcd]" />
          <ScrollArrow label="Scroll log down" />
        </div>
      </div>
      <div className="flex h-6 pl-1 text-[12px] text-[#7a7a7a]">
        {toolboxTabs.map((tab, i) => (
          <React.Fragment key={tab}>
            <button type="button" className={tab === 'Experts' ? tabOn : tabBase}>
              {tab}
              {tab === 'Mailbox' && <sub className="ml-[3px] text-[9px] leading-[0px] font-bold text-[#f02020]">10</sub>}
            </button>
            {i < 9 && <i className="mt-[3px] h-[15px] w-px bg-[#909090]" />}
          </React.Fragment>
        ))}
        <div className="mr-2 ml-auto flex items-center gap-[9px] text-black">
          <a href="#market" className="flex items-center gap-[5px]"><BagIcon size={14} />Market</a>
          <a href="#signals" className="flex items-center gap-[4px] text-[#a8a8a8]"><SignalIcon size={15} />Signals</a>
          <a href="#vps" className="flex items-center gap-[4px]"><CloudIcon size={16} />VPS</a>
          <a href="#tester" className="flex items-center gap-[4px]">
            <Icon w={16} h={16}>
              <path d="M4.500 0v16M7 0v16M9.500 0v16M12 0v16M0 4.500h16M0 7h16M0 9.500h16M0 12h16" />
              <rect x="2.500" y="2.500" width="11" height="11" rx="1" fill={LIGHT} strokeWidth="1.500" />
            </Icon>
            Tester
          </a>
        </div>
      </div>
    </div>
  </section>
);

const StatusBar = () => (
  <div className="flex h-[23px] items-center pt-[2px] text-[12px]">
    <span className="flex-1 pl-[2px]">For Help, press F1</span>
    <span className="h-[18px] w-[128px] border-l border-[#a0a0a0] pl-[5px]">Default</span>
    <span className="h-[18px] w-[98px] border-l border-[#a0a0a0]" />
    <span className="h-[18px] w-[71px] border-l border-[#a0a0a0]" />
    <span className="h-[18px] w-[71px] border-l border-[#a0a0a0]" />
    <span className="h-[18px] w-[68px] border-l border-[#a0a0a0]" />
    <span className="h-[18px] w-[70px] border-l border-[#a0a0a0]" />
    <span className="h-[18px] w-[66px] border-l border-[#a0a0a0]" />
    <span className="flex h-[18px] w-[121px] items-center gap-[6px] border-l border-[#a0a0a0] pl-[5px]">
      <Icon w={14} h={11} stroke={GREEN}><path d="M1 11V9M4 11V7M7 11V5M10 11V3M13 11V0" strokeWidth="2" /></Icon>
      18.3 / 0.2 Mb
    </span>
  </div>
);

const TaskButton: React.FC<{ label: string; open?: boolean; active?: boolean; children: React.ReactNode }> = ({ label, open, active, children }) => (
  <button
    type="button"
    aria-label={label}
    className={clsx('relative flex h-10 w-[49px] shrink-0 items-center justify-center', active && 'bg-[#555452]')}
  >
    {children}
    {(open || active) && <i className={clsx('absolute bottom-0 h-[2px] bg-[#76b9ed]', active ? 'w-full' : 'w-10')} />}
  </button>
);

const SearchArt = () => (
  <svg width="66" height="34" viewBox="0 0 66 34" className="mr-1 ml-auto shrink-0" aria-hidden="true">
    <path d="M4 5c3-2 6 0 6 5v9c0 4-4 5-5 8 0 2 3 2 5-2l5-5 4 2c-1 7-5 11-11 11-6 0-7-5-4-9 3-4 3-7 3-12 0-4-1-6-3-5z" fill="#e9a11d" />
    <path d="M9 10v10M13 24l4-4" stroke="#8a5208" strokeWidth="1.500" fill="none" />
    <path d="M1 3l5 2" stroke="#5a3a3a" strokeWidth="2" />
    <path d="M17 4c9-5 17 2 24 7s15 6 23 5l-1 8c-10 4-20 3-28-3S24 13 20 14z" fill="#e8def2" stroke="#8a74a8" strokeWidth=".6" />
    <path d="M20 3l3 7M24 2l2 9M28 2l1 9M32 4v9M36 6l-1 10M40 9l-1 10M44 12l-1 9M48 14v9M53 16l1 7M58 17l2 6" stroke="#43305c" strokeWidth="1.600" />
  </svg>
);

const Taskbar = () => (
  <footer className="flex h-10 items-center bg-[#282725] text-[14px] text-white">
    <button type="button" aria-label="Start" className="flex w-[48px] justify-center">
      <svg width="16" height="16" viewBox="0 0 16 16" fill="#fff" aria-hidden="true">
        <path d="M0 2.300L6.500 1.400v6.200H0zM7.300 1.300L16 0v7.600H7.300zM0 8.400h6.500v6.200L0 13.700zM7.300 8.400H16V16l-8.700-1.300z" />
      </svg>
    </button>
    <label className="flex h-10 w-[288px] items-center border border-[#c8c8c8] bg-[#f2f2f2] pl-[10px] text-[#3c3c3c]">
      <Icon w={18} h={18} stroke="#222"><circle cx="11" cy="7" r="5.500" strokeWidth="1.300" /><path d="M7 11l-6 6" strokeWidth="1.300" /></Icon>
      <input aria-label="Search" placeholder="Type here to search" className="ml-[11px] w-[150px] bg-transparent outline-none placeholder:text-[#404040]" />
      <SearchArt />
    </label>
    <TaskButton label="Task view">
      <Icon w={16} h={16} stroke="#fff"><path d="M.5 0v2.500h10V0M.5 16v-2.500h10V16M.5 5.500h10v5H.5zM14.500 0v4M14.500 8v8" strokeWidth="1.200" /><path d="M13 5h3v2h-3z" fill="#fff" stroke="none" /></Icon>
    </TaskButton>
    <span className="w-[2px]" />
    <TaskButton label="Copilot">
      <svg width="24" height="22" viewBox="0 0 24 22" aria-hidden="true">
        <defs>
          <linearGradient id="cpA" x1="0" y1="0" x2="0" y2="1"><stop stopColor="#1b8fe8" /><stop offset=".5" stopColor="#35b88a" /><stop offset="1" stopColor="#f5c92c" /></linearGradient>
          <linearGradient id="cpB" x1="1" y1="0" x2="0" y2="1"><stop stopColor="#a35cf0" /><stop offset=".5" stopColor="#ea4c8c" /><stop offset="1" stopColor="#f9833a" /></linearGradient>
        </defs>
        <path d="M7 1h8c2 0 3 1 3.500 3l.5 2h-4c-2 0-3 1-3.500 3L10 14c-.6 2-1.500 3-3.500 3H3c-3 0-3-3-2-6l2.500-7C4.200 2 5 1 7 1z" fill="url(#cpA)" />
        <path d="M17 21H9c-2 0-3-1-3.500-3L5 17h4c2 0 3-2 3.500-4l1.500-5c.6-2 1.500-3 3.500-3H21c3 0 3 3 2 6l-2.500 7c-.7 2-1.500 3-3.500 3z" fill="url(#cpB)" />
      </svg>
    </TaskButton>
    <TaskButton label="Edge">
      <svg width="24" height="24" viewBox="0 0 24 24" aria-hidden="true">
        <defs>
          <linearGradient id="edA" x1="0" y1="0" x2="1" y2="0.300"><stop stopColor="#27a5e8" /><stop offset="1" stopColor="#5fe06a" /></linearGradient>
        </defs>
        <circle cx="12" cy="12" r="11.500" fill="#1673c4" />
        <path d="M.6 11C1.500 4 7 .5 12.500.5c6.500 0 11 5 11 9.500 0 4-3 6-6.500 6-2.500 0-3.500-1-3-2 .8-1.200 1-2 .5-3.500C13.500 8 11 6.500 8 6.500c-4 0-6.500 2-7.400 4.500z" fill="url(#edA)" />
        <path d="M9 9.500c-3 3-2 9 3 11 3.500 1.400 7.500 0 9.500-2.500-3 5-9 6.500-13 5-5-2-6-11 .5-13.500z" fill="#0c4f9e" />
        <path d="M14 12c-1.500 1.500-1 4 2.500 4.500 2 .3 4-.3 5.500-1.500l-.5 2.500c-4 2.500-9 .5-9.500-2.500-.2-1.500.8-2.800 2-3z" fill="#282725" />
      </svg>
    </TaskButton>
    <TaskButton label="File Explorer" open>
      <svg width="22" height="20" viewBox="0 0 22 20" aria-hidden="true">
        <path d="M0 2c0-1 .5-1.500 1.500-1.500H8L10 3h11c.6 0 1 .4 1 1v14H0z" fill="#e8a72c" />
        <path d="M0 5h22v13H0z" fill="#fdd365" />
        <path d="M4 19v-6c0-1 1-2 2-2h10c1 0 2 1 2 2v6h-4v-4H8v4z" fill="#3a96dd" />
      </svg>
    </TaskButton>
    <TaskButton label="Store">
      <svg width="24" height="24" viewBox="0 0 24 24" aria-hidden="true">
        <path d="M7 6V2.500C7 1.500 7.500 1 8.500 1h7c1 0 1.500.5 1.500 1.500V6" stroke="#2ab4f0" strokeWidth="2" fill="none" />
        <path d="M.5 5h23v15c0 2-1 3.500-3 3.500h-17c-2 0-3-1.500-3-3.500z" fill="#f4f4f4" />
        <path d="M7 9h4.500v4.500H7z" fill="#f25022" /><path d="M12.500 9H17v4.500h-4.500z" fill="#7fba00" />
        <path d="M7 14.500h4.500V19H7z" fill="#00a4ef" /><path d="M12.500 14.500H17V19h-4.500z" fill="#ffb900" />
      </svg>
    </TaskButton>
    <TaskButton label="TradingView" open>
      <svg width="24" height="24" viewBox="0 0 24 24" aria-hidden="true">
        <rect width="24" height="24" rx="4" fill="#131722" />
        <path d="M2 7.500h9V17H7v-5.500H2zM16.500 17h-4l4-9.500h5z" fill="#fff" /><circle cx="13.500" cy="9.500" r="2" fill="#fff" />
      </svg>
    </TaskButton>
    <TaskButton label="Chrome" open>
      <svg width="24" height="24" viewBox="0 0 24 24" aria-hidden="true">
        <circle cx="12" cy="12" r="11.500" fill="#fbc116" />
        <path d="M2 6.300A11.500 11.500 0 0 1 22 6.300H12L7 15z" fill="#e33b2e" />
        <path d="M2 6.300A11.500 11.500 0 0 0 11.500 23.500L17 14.800 7 15z" fill="#229342" />
        <circle cx="12" cy="12" r="5.600" fill="#fff" /><circle cx="12" cy="12" r="4.500" fill="#2f7de9" />
      </svg>
    </TaskButton>
    <TaskButton label="MEX terminal" active>
      <span className="text-[8px] font-bold text-[#d9aa66]">MEX<sup className="text-[5px]">+</sup></span>
    </TaskButton>
    <TaskButton label="MetaTrader" open>
      <svg width="20" height="24" viewBox="0 0 20 24" aria-hidden="true">
        <path d="M9 5h10v14H9z" fill="#fdd006" /><path d="M1 3l11-3v24L1 20z" fill="#c98a14" />
        <path d="M9.500 5.500L5.500 6.500 5 11.500c2-1 4-.5 4 1.800S6.500 16.500 4 15.500" fill="none" stroke="#fff" strokeWidth="2" />
      </svg>
    </TaskButton>
    <div className="ml-auto flex h-full items-center">
      <svg width="24" height="24" viewBox="0 0 24 24" aria-hidden="true">
        <path d="M16 1c11 5 9 21-3 22-5 .3-9-2-11-6 9 3 17-4 14-16z" fill="#f7a823" />
        <path d="M3.500 10.500C0 10.500-.5 6 3 5c1-5 7-5 8 0 5-.5 5 5.500 1 5.500z" fill="#8fb8f5" />
      </svg>
      <span className="ml-[9px]">32°C</span>
      <span className="ml-[9px]">Mostly clear</span>
      <span className="ml-6 flex items-center">
        <Icon w={12} h={8} stroke="#fff"><path d="M1 6.500l5-5 5 5" strokeWidth="1.300" /></Icon>
        <span className="w-3" />
        <Icon w={14} h={14} stroke="#ddd"><path d="M1 9C4 3.500 8 1.500 13 1.500M3 12C5 7 8.500 5 13 4.500M6 13.500c1-3.500 3.500-5.500 7-6M9 13.500c.5-2 2-3 4-3.300" /><circle cx="12" cy="12.500" r="1.300" fill="#fff" stroke="none" /></Icon>
        <span className="w-[7px]" />
        <Icon w={17} h={14} stroke="#fff"><path d="M1 5h2.500L7 1.500v11L3.500 9H1zM9 5c1 1 1 3 0 4M11.500 3.500c2 2 2 5 0 7M14 2c3 3 3 7 0 10" /></Icon>
      </span>
      <time className="ml-[7px] text-center text-[12px] leading-[18px]">9:29 PM<br />4/30/2025</time>
      <button type="button" aria-label="Notification center" className="ml-[16px]">
        <Icon w={16} h={16} stroke="#fff"><path d="M.5 1h15v11.500h-5L8 15l-2.500-2.500h-5z" strokeWidth="1.200" /></Icon>
      </button>
      <i className="mr-1 ml-5 h-full w-px bg-[#5a5957]" />
    </div>
  </footer>
);

export default function App() {
  return (
    <div className="flex min-h-screen flex-col overflow-x-hidden bg-[#f0f0f0] font-['Open_Sans',sans-serif] text-black">
      <TitleBar />
      <MenuBar />
      <Toolbar />
      <main className="flex flex-1">
        <aside className="flex w-[349px] shrink-0 flex-col pr-[4px] pl-[3px]">
          <MarketWatch />
          <Navigator />
        </aside>
        <div className="flex min-w-0 flex-1 flex-col pr-[2px]">
          <Chart />
          <ChartTabs />
        </div>
      </main>
      <Toolbox />
      <StatusBar />
      <Taskbar />
    </div>
  );
}
